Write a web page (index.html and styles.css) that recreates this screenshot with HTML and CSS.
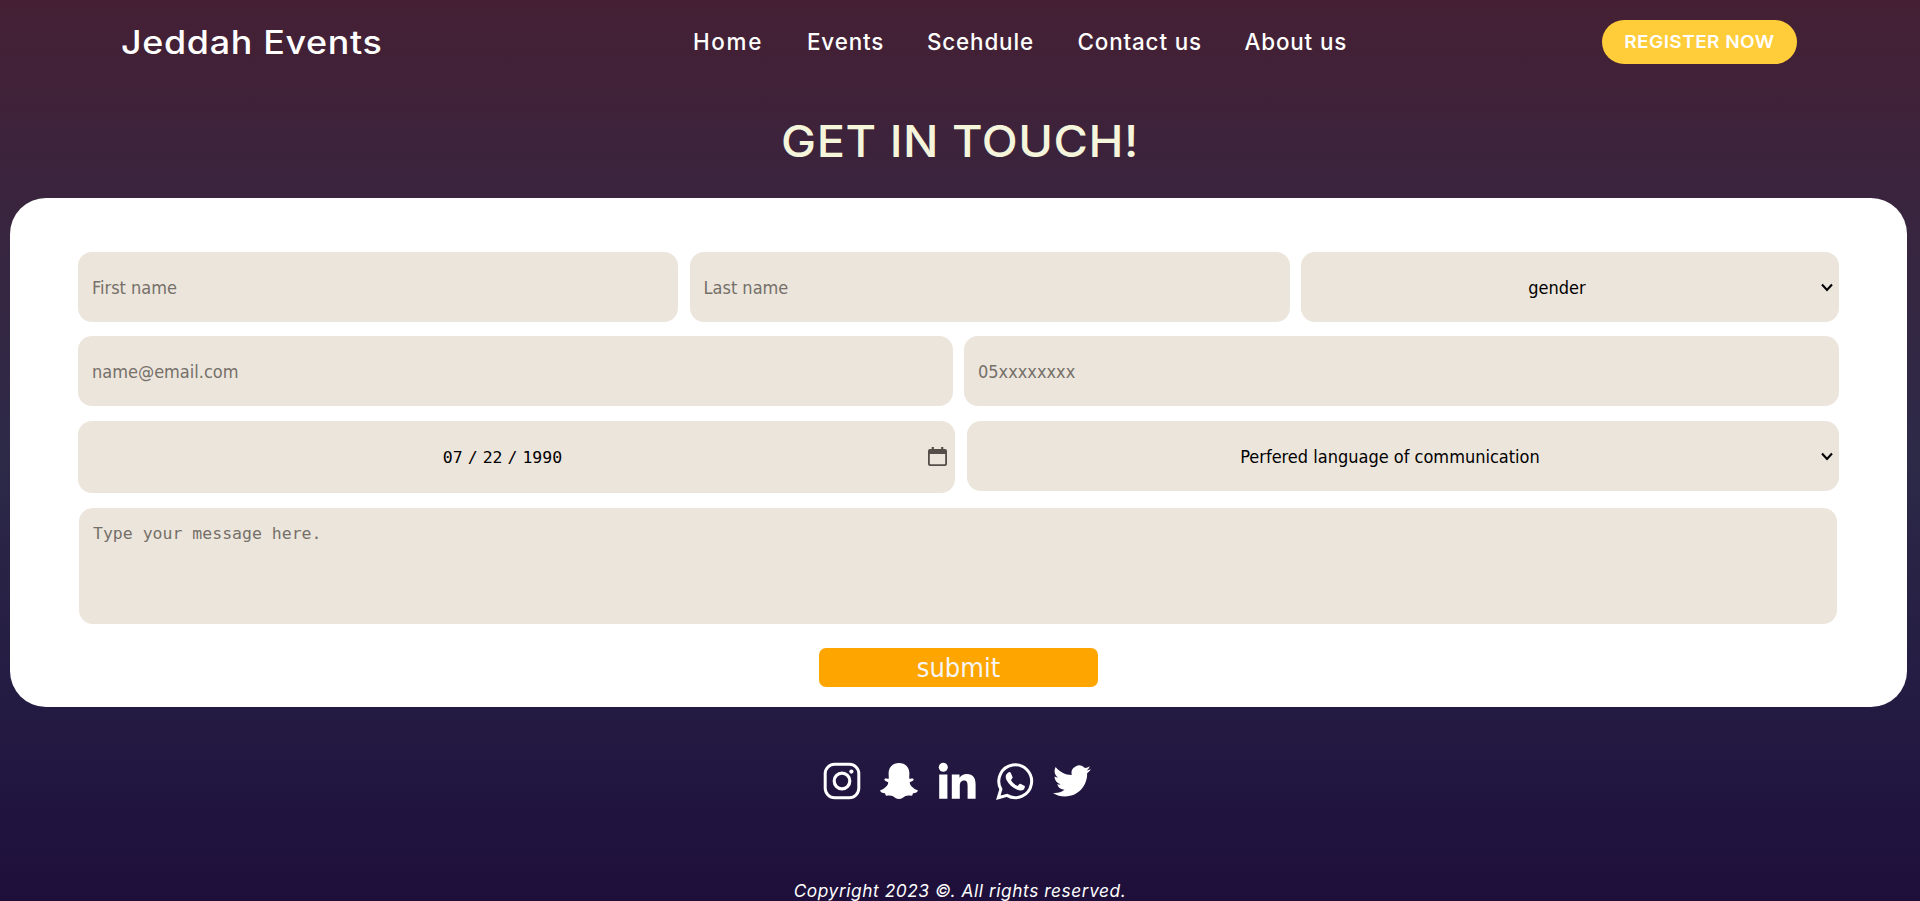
FILE: index.html
```
<!DOCTYPE html>
<html lang="en">
<head>
<meta charset="utf-8">
<title>Jeddah Events</title>
<link rel="stylesheet" href="styles.css">
</head>
<body>
<header class="header">
  <a class="brand"><span class="brand-text">Jeddah Events</span></a>
  <nav class="nav"><a class="nav-home">Home</a><a>Events</a><a>Scehdule</a><a>Contact us</a><a>About us</a></nav>
  <a class="register"><span class="register-text">REGISTER NOW</span></a>
</header>
<h1 class="title"><span class="title-text">GET IN TOUCH!</span></h1>
<form class="card">
  <div class="row row-names">
    <input class="field" type="text" placeholder="First name">
    <input class="field" type="text" placeholder="Last name">
    <div class="select-box">
      <select class="field select"><option>gender</option></select>
      <svg class="chevron" viewBox="0 0 12 9"><path d="M1 1.500L6 7L11 1.500" fill="none" stroke="#000" stroke-width="2.100"/></svg>
    </div>
  </div>
  <div class="row row-contact">
    <input class="field" type="email" placeholder="name@email.com">
    <input class="field" type="tel" placeholder="05xxxxxxxx">
  </div>
  <div class="row row-details">
    <div class="field date">
      <div class="date-value"><span>07</span><span class="slash">/</span><span>22</span><span class="slash">/</span><span>1990</span></div>
      <svg class="calendar" viewBox="0 0 19 19"><path fill="#544d48" fill-rule="evenodd" d="M3.700 0H5.900V2H13.100V0H15.300V2H17A2 2 0 0 1 19 4V17A2 2 0 0 1 17 19H2A2 2 0 0 1 0 17V4A2 2 0 0 1 2 2H3.700ZM1.800 7V16.600Q1.800 17.300 2.500 17.300H16.500Q17.200 17.300 17.200 16.600V7Z"/></svg>
    </div>
    <div class="select-box">
      <select class="field select"><option>Perfered language of communication</option></select>
      <svg class="chevron" viewBox="0 0 12 9"><path d="M1 1.500L6 7L11 1.500" fill="none" stroke="#000" stroke-width="2.100"/></svg>
    </div>
  </div>
  <textarea class="field message" placeholder="Type your message here."></textarea>
  <button class="submit" type="button">submit</button>
</form>
<footer class="footer">
  <div class="social">
    <svg viewBox="0 0 38 38"><rect x="2.2" y="2.2" width="33.6" height="33.6" rx="9.5" fill="none" stroke="#fff" stroke-width="3"/><circle cx="19" cy="19" r="7.8" fill="none" stroke="#fff" stroke-width="3.200"/><circle cx="28.4" cy="9.6" r="2.1" fill="#fff"/></svg>
    <svg viewBox="0 0 38 38"><path fill="#fff" d="M19 1C12.500 1 8.600 5.200 8.600 11.500L8.800 16.500C7.500 17.200 6 16 4.700 16.800C3.700 18 5.400 19.100 8.200 20.300C8.300 23.500 4.200 27 .4 28.100C-.1 30 2 30.700 5 31.200C5.600 32.500 5.400 33.500 6.500 33.700C8.400 33.500 10.500 33 12.600 34.100C14.600 35.400 16.200 37 19 37C21.800 37 23.400 35.400 25.400 34.100C27.500 33 29.600 33.500 31.500 33.700C32.600 33.500 32.400 32.500 33 31.200C36 30.700 38.100 30 37.600 28.100C33.800 27 29.700 23.500 29.800 20.300C32.600 19.100 34.300 18 33.300 16.800C32 16 30.500 17.200 29.200 16.500L29.400 11.500C29.400 5.200 25.500 1 19 1Z"/></svg>
    <svg viewBox="0 0 38 38"><g fill="#fff"><circle cx="5.300" cy="5.200" r="4.500"/><path d="M1.200 12.500H9.400V36.800H1.200ZM13.800 12.500H21.500V15.800C23 13.400 25.500 12 28.700 12C35.500 12 37.600 16.300 37.600 22.700V36.800H29.600V24C29.600 20.800 29 18.600 26.200 18.600C23 18.600 21.800 21 21.800 24V36.800H13.800Z"/></g></svg>
    <svg viewBox="0 0 38 38"><path d="M2.300 35.800L4.900 27.200A16.400 16.400 0 1 1 11 33.400Z" fill="none" stroke="#fff" stroke-width="3"/><path fill="#fff" d="M12.700 10.200C13.400 9.900 14.300 10 14.700 10.800L16.600 14.900C16.900 15.700 15.500 17.300 15 18C16.500 20.900 18.600 22.700 21.700 24C22.600 23.200 23.500 21.500 24.500 21.800L28.700 23.900C29.200 24.500 28.600 26.500 27.800 27.400C26 29 23.400 28.600 20.700 27.500C16.300 25.700 13 22.400 10.800 18.600C9 15.600 9.300 11.900 12.700 10.200Z"/></svg>
    <svg viewBox="0 0 24 24"><path fill="#fff" d="M23.953 4.57a10 10 0 01-2.825.775 4.958 4.958 0 002.163-2.723c-.951.555-2.005.959-3.127 1.184a4.92 4.92 0 00-8.384 4.482C7.69 8.095 4.067 6.13 1.64 3.162a4.822 4.822 0 00-.666 2.475c0 1.71.87 3.213 2.188 4.096a4.904 4.904 0 01-2.228-.616v.06a4.923 4.923 0 003.946 4.827 4.996 4.996 0 01-2.212.085 4.936 4.936 0 004.604 3.417 9.867 9.867 0 01-6.102 2.105c-.39 0-.779-.023-1.17-.067a13.995 13.995 0 007.557 2.209c9.053 0 13.998-7.496 13.998-13.985 0-.21 0-.42-.015-.63A9.935 9.935 0 0024 4.59z"/></svg>
  </div>
  <p class="copyright">Copyright 2023 ©. All rights reserved.</p>
</footer>
</body>
</html>
```
FILE: styles.css
```
* { box-sizing: border-box; }
body {
  margin: 0;
  height: 901px;
  overflow: hidden;
  background: linear-gradient(#452034 0, #3c233c 17%, #2d2a48 50%, #231a42 80%, #1e0f3a 100%);
  font-family: Inter, "Open Sans", sans-serif;
  color: #fff;
}
.header {
  display: flex;
  align-items: center;
  height: 84px;
  padding: 0 123px 0 121px;
}
.brand { width: 572px; font-size: 32px; font-weight: 500; white-space: nowrap; }
.brand-text { display: inline-block; letter-spacing: .6px; transform: scaleX(1.12); transform-origin: left; }
.nav {
  display: grid;
  grid-template-columns: 114px 120px 150.500px 167px auto;
  font-size: 22.4px;
  font-weight: 500;
  letter-spacing: .85px;
  line-height: 28px;
  margin-top: -1px;
  white-space: nowrap;
}
.nav-home { letter-spacing: 1.7px; }
.register {
  margin-left: auto;
  width: 195px;
  height: 44px;
  border-radius: 22px;
  background: #ffcc3a;
  font-size: 17.3px;
  font-weight: 600;
  line-height: 44px;
  text-align: center;
}
.register-text { display: inline-block; letter-spacing: .4px; transform: scaleX(1.1); }
.title {
  margin: 0;
  height: 114px;
  line-height: 115px;
  text-align: center;
  color: beige;
  font-size: 43.5px;
  font-weight: 500;
}
.title-text { display: inline-block; letter-spacing: .5px; transform: scaleX(1.078); }
.card {
  display: flex;
  flex-direction: column;
  width: 1897px;
  height: 509px;
  margin-left: 10px;
  padding: 54px 68px 0;
  border-radius: 36px;
  background: #fff;
}
.row { display: grid; align-items: start; }
.row-names { grid-template-columns: 600px 600px 538px; column-gap: 11.500px; height: 84px; }
.row-contact { grid-template-columns: 875px 875px; column-gap: 11px; height: 85px; }
.row-details { grid-template-columns: 877px 872px; column-gap: 12px; height: 87px; }
.field {
  width: 100%;
  height: 70px;
  margin: 0;
  padding: 0 14px;
  border: 0;
  border-radius: 14px;
  background: #ece5dc;
  color: #000;
  font: 18px "DejaVu Sans Condensed", "Noto Sans", sans-serif;
}
.field::placeholder { color: #757069; opacity: 1; }
.select-box { position: relative; }
.select { display: block; appearance: none; padding: 0 26px 0 0; text-align: center; }
.chevron { position: absolute; right: 6px; top: 31px; width: 12px; height: 9px; pointer-events: none; }
.date {
  display: flex;
  align-items: center;
  height: 72px;
  padding: 0 8px 0 14px;
  font: 16.5px "DejaVu Sans Mono", monospace;
}
.date-value { flex: 1; display: flex; justify-content: center; padding-right: 15px; }
.slash { margin: 0 5px; }
.calendar { width: 19px; height: 19px; margin-top: -2px; }
.message {
  width: 1758px;
  height: 116px;
  margin-left: 1px;
  padding: 16px 14px;
  resize: none;
  font: 16.5px "DejaVu Sans Mono", monospace;
}
.submit {
  align-self: center;
  width: 279px;
  height: 39px;
  margin: 24px 0 0;
  padding: 0;
  border: 0;
  border-radius: 7px;
  background: orange;
  color: #f5f5f5;
  font: 27px "DejaVu Sans Condensed", "Noto Sans", sans-serif;
}
.footer { display: flex; flex-direction: column; align-items: center; }
.social { display: flex; gap: 19.700px; margin: 55px 6px 0 0; }
.social svg { width: 38px; height: 38px; }
.copyright {
  margin: 79px 0 0;
  font-size: 17.3px;
  font-style: italic;
  letter-spacing: .57px;
  line-height: 24px;
}
```
